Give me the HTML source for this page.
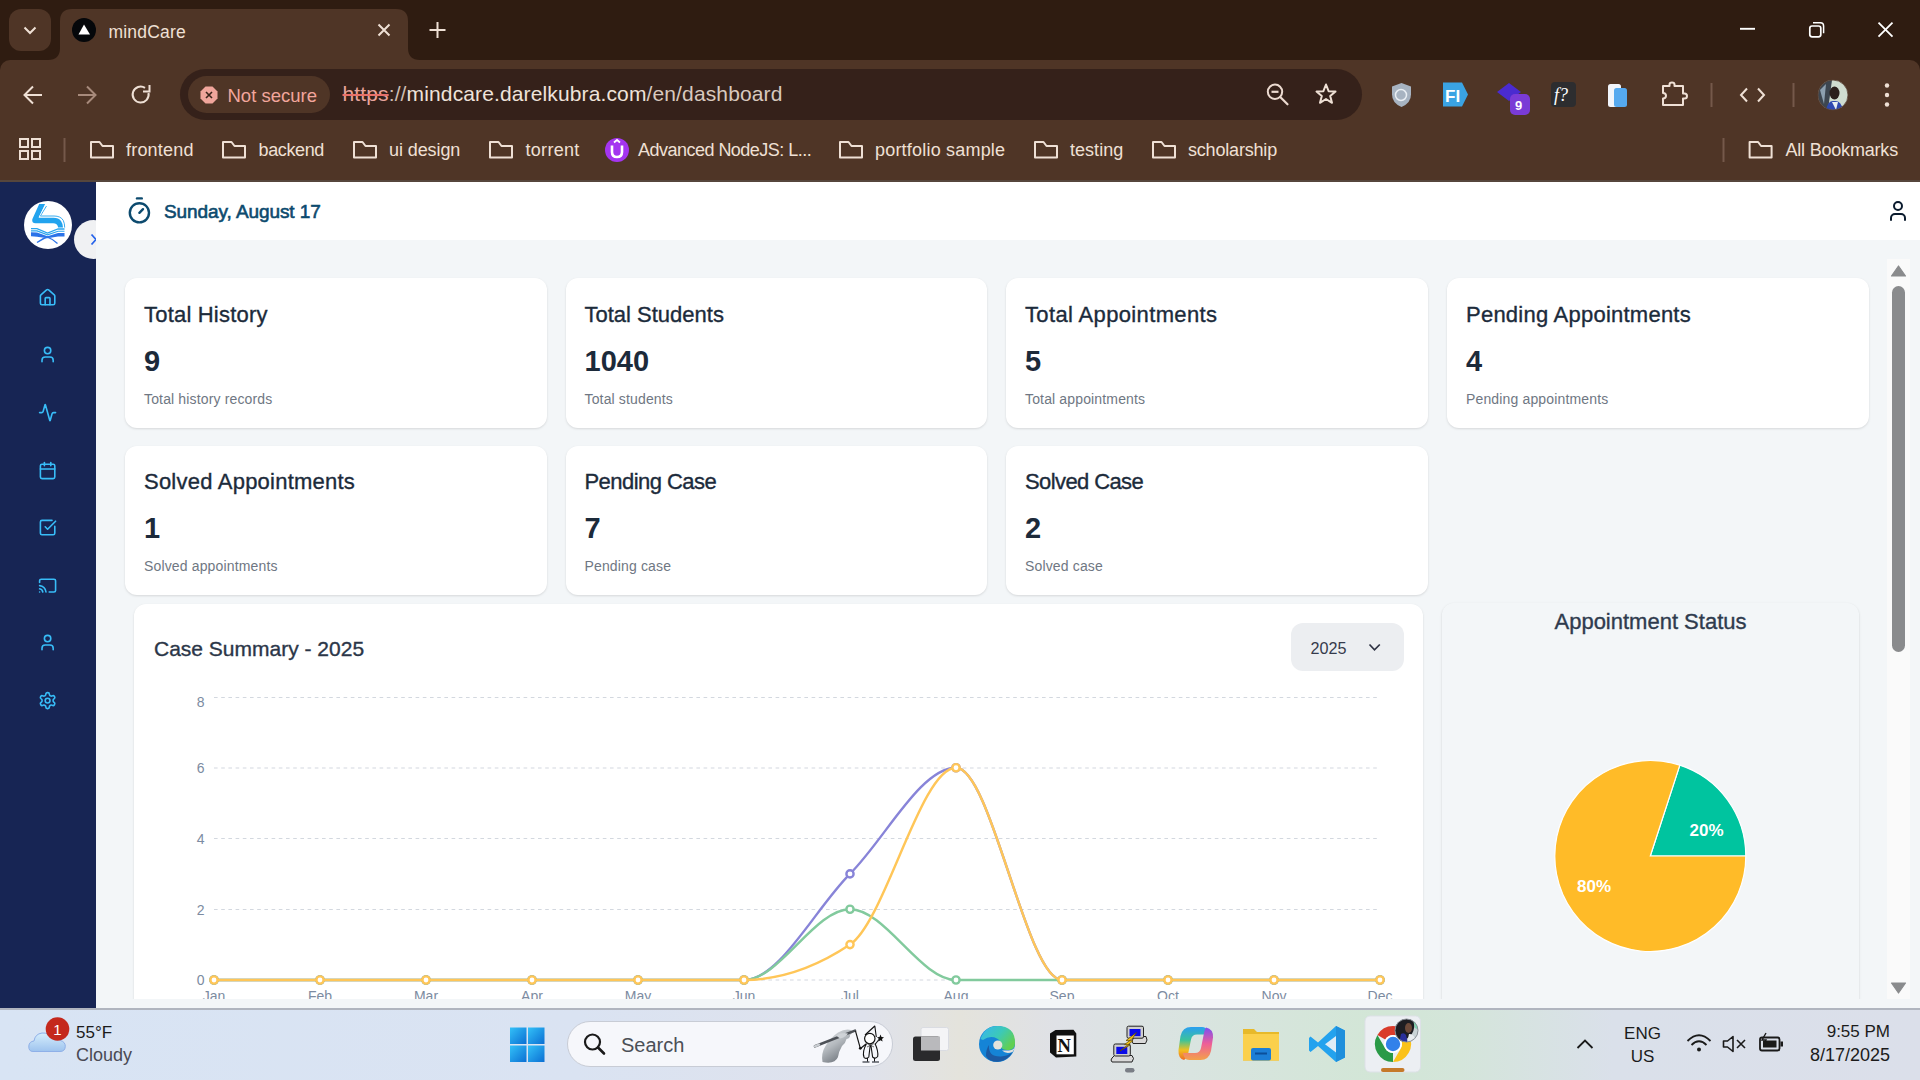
<!DOCTYPE html>
<html><head><meta charset="utf-8"><title>mindCare</title>
<style>
*{box-sizing:border-box;margin:0;padding:0}
html,body{width:1920px;height:1080px;overflow:hidden;background:#2f1c11;font-family:"Liberation Sans",sans-serif}
.a{position:absolute}
svg{position:absolute;overflow:visible}
.cream{color:#efe0d5}
#titlebar{left:0;top:0;width:1920px;height:60px;background:#2f1c11}
#toolbar{left:0;top:60px;width:1920px;height:120px;background:#4f3526;border-radius:10px 10px 0 0}
#sep{left:0;top:180px;width:1920px;height:2px;background:#56463c}
.bm{font-size:18px;color:#efe0d5;white-space:nowrap;line-height:20px;letter-spacing:.2px}
#page{left:0;top:182px;width:1920px;height:826px;background:#f3f6f8;overflow:hidden}
#sidebar{left:0;top:0;width:96px;height:826px;background:#172554;overflow:hidden}
#header{left:96px;top:0;width:1824px;height:58px;background:#fff}
.card{position:absolute;background:#fff;border-radius:12px;box-shadow:0 1px 3px rgba(0,0,0,.08),0 1px 2px rgba(0,0,0,.05)}
.ct{position:absolute;left:19px;top:23.5px;font-size:22px;color:#1c2b3b;-webkit-text-stroke:.35px #1c2b3b;white-space:nowrap;line-height:26px}
.cn{position:absolute;left:19px;top:66.5px;font-size:29px;font-weight:bold;color:#1c2a3a;line-height:32px}
.cs{position:absolute;left:19px;top:112.5px;font-size:14px;color:#6f7783;letter-spacing:.15px;white-space:nowrap;line-height:16px}
#taskbar{left:0;top:1008px;width:1920px;height:72px;background:linear-gradient(90deg,#d8e4f4 0%,#dae3f2 30%,#dfe2ec 45%,#e4e3dc 50%,#dfe1e6 55%,#d9e4e0 62%,#d2e6d6 72%,#d4e5da 76%,#dae0ea 84%,#dbdfea 100%)}
.tb{font-size:18px;color:#1b1b1b;white-space:nowrap;line-height:20px}
</style></head>
<body>
<!-- ============ TITLE BAR ============ -->
<div id="titlebar" class="a">
  <!-- tab search -->
  <div class="a" style="left:9px;top:9px;width:42px;height:42px;border-radius:12px;background:#4f3526"></div>
  <svg style="left:0;top:0" width="60" height="60"><path d="M24.5 27.5 L30 33 L35.5 27.5" fill="none" stroke="#efe0d5" stroke-width="2"/></svg>
  <!-- active tab -->
  <svg style="left:48px;top:9px" width="372" height="51"><path d="M0 51 Q12 51 12 39 L12 12 Q12 0 24 0 L348 0 Q360 0 360 12 L360 39 Q360 51 372 51 Z" fill="#4f3526"/></svg>
  <div class="a" style="left:72px;top:18px;width:24px;height:24px;border-radius:50%;background:#05070a"></div>
  <svg style="left:0;top:0" width="100" height="60"><path d="M84 24.5 L90 34.5 L78.5 34.5 Z" fill="#fff"/></svg>
  <div class="a bm" style="left:108.5px;top:21.5px;font-size:17.5px">mindCare</div>
  <svg style="left:0;top:0" width="460" height="60"><path d="M378.5 24.5 L389.5 35.5 M389.5 24.5 L378.5 35.5" stroke="#efe0d5" stroke-width="2"/><path d="M437.5 22 V38 M429.5 30 H445.5" stroke="#efe0d5" stroke-width="2"/></svg>
  <!-- window controls -->
  <svg style="left:0;top:0" width="1920" height="60">
    <path d="M1740 28.8 H1755" stroke="#fff" stroke-width="1.9"/>
    <rect x="1809.8" y="26" width="11" height="10.8" rx="2.3" fill="none" stroke="#fff" stroke-width="1.7"/>
    <path d="M1813 22.8 H1820.5 Q1823.6 22.8 1823.6 25.9 V33.3" fill="none" stroke="#fff" stroke-width="1.5"/>
    <path d="M1878.5 22.7 L1892.5 36.7 M1892.5 22.7 L1878.5 36.7" stroke="#fff" stroke-width="1.8"/>
  </svg>
</div>

<!-- ============ TOOLBAR + BOOKMARKS ============ -->
<div id="toolbar" class="a">
  <svg style="left:0;top:0" width="180" height="60">
    <path d="M42 35 H25 M33 26.5 L24.5 35 L33 43.5" fill="none" stroke="#efe0d5" stroke-width="2"/>
    <path d="M78 35 H95 M87 26.5 L95.5 35 L87 43.5" fill="none" stroke="#a78a7b" stroke-width="2"/>
    <path d="M148.5 33 A8 8 0 1 1 145 27.8" fill="none" stroke="#efe0d5" stroke-width="2"/>
    <path d="M149.5 25 V31.5 H143" fill="none" stroke="#efe0d5" stroke-width="2"/>
  </svg>
  <!-- omnibox -->
  <div class="a" style="left:180px;top:9px;width:1182px;height:51px;border-radius:26px;background:#35211a"></div>
  <div class="a" style="left:188px;top:16px;width:142px;height:37px;border-radius:19px;background:#4f3526"></div>
  <svg style="left:0;top:0" width="240" height="60">
    <path d="M205.5 26.5 H212.5 L217.5 31.5 V38.5 L212.5 43.5 H205.5 L200.5 38.5 V31.5 Z" fill="#f0a59b"/>
    <path d="M206 32 L212 38 M212 32 L206 38" stroke="#3a241a" stroke-width="1.6"/>
  </svg>
  <div class="a" style="left:227.5px;top:24.5px;font-size:18.5px;color:#f2a69c;line-height:22px;white-space:nowrap">Not secure</div>
  <div id="url" class="a" style="left:342.5px;top:22px;font-size:21px;letter-spacing:.13px;line-height:24px;white-space:nowrap;color:#efe3da"><span style="color:#e8a49c;text-decoration:line-through;text-decoration-color:#e8706a">https</span><span style="color:#cdbdb2">://</span>mindcare.darelkubra.com<span style="color:#d8c9bf">/en/dashboard</span></div>
  <svg style="left:0;top:0" width="1920" height="60">
    <circle cx="1275" cy="31.8" r="7.2" fill="none" stroke="#ecdad0" stroke-width="2"/>
    <path d="M1271.5 31.8 H1278.5" stroke="#ecdad0" stroke-width="2.2"/><path d="M1280.2 37 L1287.5 44.3" stroke="#ecdad0" stroke-width="2.2" stroke-linecap="round"/>
    <path d="M1326 24.5 L1328.6 31.2 L1335.5 31.6 L1330.2 36 L1332 42.8 L1326 39 L1320 42.8 L1321.8 36 L1316.5 31.6 L1323.4 31.2 Z" fill="none" stroke="#efe0d5" stroke-width="2" stroke-linejoin="round"/>
  </svg>
  <!-- extensions -->
  <svg style="left:0;top:0" width="1920" height="60">
    <path d="M1401.5 23 L1411 26.5 V34.5 Q1411 43 1401.5 47 Q1392 43 1392 34.5 V26.5 Z" fill="#a7b3c1"/>
    <circle cx="1401" cy="35" r="5.5" fill="none" stroke="#e9eef3" stroke-width="1.5"/>
    <path d="M1443 22.5 H1462 L1468 34.5 L1462 46.5 H1443 Z" fill="#3aa3e3"/>
    <text x="1445" y="42" font-family="Liberation Sans" font-weight="bold" font-size="17" fill="#fff">FI</text>
    <path d="M1509 23 L1521 32 L1509 41 L1497 32 Z" fill="#4a2bd0"/>
    <rect x="1510" y="34" width="20" height="21" rx="5" fill="#7a3bd6"/>
    <text x="1515" y="50" font-family="Liberation Sans" font-weight="bold" font-size="13" fill="#fff">9</text>
    <rect x="1551" y="22" width="25" height="25" rx="4" fill="#2d2d2f"/>
    <text x="1554" y="41" font-family="Liberation Serif" font-style="italic" font-size="18" fill="#fff">f?</text>
    <rect x="1608" y="24" width="13" height="23" rx="2.5" fill="#f1f5fb"/>
    <rect x="1614" y="28" width="13" height="19" rx="2.5" fill="#55a9ef"/>
    <path d="M1663 26 H1669.5 V24.5 Q1669.5 22.5 1672 22.5 Q1674.5 22.5 1674.5 24.5 V26 H1683 V33.5 H1684.5 Q1687 33.5 1687 36 Q1687 38.5 1684.5 38.5 H1683 V45 H1663 V38.5 Q1666 38.5 1666 35.8 Q1666 33 1663 33 Z" fill="none" stroke="#efe0d5" stroke-width="2" stroke-linejoin="round"/>
    <path d="M1711.5 23 V47" stroke="#75594a" stroke-width="2"/>
    <path d="M1747 28.5 L1741 35 L1747 41.5 M1758 28.5 L1764 35 L1758 41.5" fill="none" stroke="#efe0d5" stroke-width="2"/>
    <path d="M1793.5 23 V47" stroke="#75594a" stroke-width="2"/>
    <circle cx="1887" cy="25.5" r="2.2" fill="#efe0d5"/><circle cx="1887" cy="35" r="2.2" fill="#efe0d5"/><circle cx="1887" cy="44.5" r="2.2" fill="#efe0d5"/>
  </svg>
  <svg style="left:0;top:0" width="1920" height="60"><defs><clipPath id="avc"><circle cx="1833" cy="35" r="15"/></clipPath></defs>
   <g clip-path="url(#avc)"><rect x="1818" y="20" width="30" height="30" fill="#cfdcd0"/><path d="M1818 20 H1832 L1828 50 H1818 Z" fill="#3d4650"/><path d="M1820 30 L1826 24 L1824 44 Z" fill="#8da0b0"/>
   <ellipse cx="1834.5" cy="33" rx="5" ry="6.5" fill="#2a1f1c"/><path d="M1826 50 Q1828 40 1834 41 Q1841 40 1843 50 Z" fill="#2f49b0"/><path d="M1832 42 L1836 50 L1838 42 Z" fill="#e8eef2"/></g>
   <circle cx="1833" cy="35" r="15" fill="none" stroke="#5a4236" stroke-width=".8"/></svg>

  <!-- bookmarks bar -->
  <svg style="left:0;top:60px" width="1920" height="60">
    <g fill="none" stroke="#efe0d5" stroke-width="2">
      <rect x="20" y="19" width="8" height="8"/><rect x="32" y="19" width="8" height="8"/><rect x="20" y="31" width="8" height="8"/><rect x="32" y="31" width="8" height="8"/>
    </g>
    <path d="M64.5 18 V42" stroke="#75594a" stroke-width="2"/>
    <g id="fold" fill="none" stroke="#efe0d5" stroke-width="2" stroke-linejoin="round">
      <path d="M91 22 H99.5 L102.5 26 H113 V37.6 H91 Z"/>
      <path d="M223 22 H231.5 L234.5 26 H245 V37.6 H223 Z"/>
      <path d="M354 22 H362.5 L365.5 26 H376 V37.6 H354 Z"/>
      <path d="M490 22 H498.5 L501.5 26 H512 V37.6 H490 Z"/>
      <path d="M840 22 H848.5 L851.5 26 H862 V37.6 H840 Z"/>
      <path d="M1035 22 H1043.5 L1046.5 26 H1057 V37.6 H1035 Z"/>
      <path d="M1153 22 H1161.5 L1164.5 26 H1175 V37.6 H1153 Z"/>
      <path d="M1749.6 22 H1758.1 L1761.1 26 H1771.6 V37.6 H1749.6 Z"/>
    </g>
    <path d="M1723.5 18 V42" stroke="#75594a" stroke-width="2"/>
    <circle cx="617" cy="30" r="12" fill="#a435f0"/>
    <path d="M612 25.5 V32 Q612 37 617 37 Q622 37 622 32 V25.5" fill="none" stroke="#fff" stroke-width="2.6"/><path d="M614 22.5 L617 20 L620 22.5" fill="none" stroke="#fff" stroke-width="1.8"/>
  </svg>
  <div class="a bm" style="left:126px;top:79.5px">frontend</div>
  <div class="a bm" style="left:258.5px;top:79.5px;letter-spacing:-0.37px">backend</div>
  <div class="a bm" style="left:389px;top:79.5px;letter-spacing:-0.09px">ui design</div>
  <div class="a bm" style="left:525.5px;top:79.5px;letter-spacing:0.29px">torrent</div>
  <div class="a bm" style="left:638px;top:79.5px;letter-spacing:-.52px">Advanced NodeJS: L...</div>
  <div class="a bm" style="left:875px;top:79.5px">portfolio sample</div>
  <div class="a bm" style="left:1070px;top:79.5px;letter-spacing:0.03px">testing</div>
  <div class="a bm" style="left:1188px;top:79.5px;letter-spacing:-0.19px">scholarship</div>
  <div class="a bm" style="left:1785.4px;top:79.5px;letter-spacing:-0.19px">All Bookmarks</div>
</div>
<div id="sep" class="a"></div>

<!-- PAGE -->
<div id="page" class="a">
<div id="sidebar" class="a">
  <div class="a" style="left:24px;top:19px;width:48px;height:48px;border-radius:50%;background:#fff"></div>
  <svg style="left:0;top:-182px" width="96" height="300">
    <path d="M39.2 204 H45.1 L38.6 217.7 H53.5 Q58.5 217.7 61 221 Q63 224 63 227.6 H58.1 Q58 225.5 56.5 224.3 Q55.3 223.2 53 223.2 H35.5 Q31.6 223.2 32.3 219.2 Z" fill="#22a3ee"/>
    <path d="M46.5 206 L40.3 216 H54 Q60.8 216 63.3 220.5 Q64.7 223.5 64.7 227.6" fill="none" stroke="#22a3ee" stroke-width=".9"/>
    <path d="M45.2 205.5 L39.2 216.9" fill="none" stroke="#fff" stroke-width=".6"/>
    <path d="M31 228.6 H37 L47.5 233 L58 229 H64.5" fill="none" stroke="#2aa5ee" stroke-width="1.3"/>
    <path d="M31 230.9 H37 L47.5 234.8 L58 231.2 H64.5" fill="none" stroke="#2aa5ee" stroke-width="1.1"/>
    <path d="M31 232.2 L37 232.6 L47.5 236.3 L58 233 H64.5 V236.6 L58 236.6 L47.5 238.3 L37 236.8 L31 236.2 Z" fill="#2b73e8"/>
    <path d="M37 242.6 Q43 238 49 236.5 M46 236.5 Q52 238.5 57.5 243.6" fill="none" stroke="#2b73e8" stroke-width="1.3"/>
  </svg>
  <div class="a" style="left:74px;top:38px;width:39px;height:39px;border-radius:50%;background:#f0f1f3"></div>
  <svg style="left:0;top:0" width="96" height="100"><path d="M91.5 52.5 L96 57.5 L91.5 62.5" fill="none" stroke="#2563eb" stroke-width="1.8"/></svg>
  <g></g>
  <svg style="left:38.4px;top:105.9px" width="19.2" height="19.2" viewBox="0 0 24 24" fill="none" stroke="#38bdf8" stroke-width="2" stroke-linecap="round" stroke-linejoin="round"><path d="M15 21v-8a1 1 0 0 0-1-1h-4a1 1 0 0 0-1 1v8"/><path d="M3 10a2 2 0 0 1 .709-1.528l7-5.999a2 2 0 0 1 2.582 0l7 5.999A2 2 0 0 1 21 10v9a2 2 0 0 1-2 2H5a2 2 0 0 1-2-2z"/></svg>
  <svg style="left:38.4px;top:163.4px" width="19.2" height="19.2" viewBox="0 0 24 24" fill="none" stroke="#38bdf8" stroke-width="2" stroke-linecap="round" stroke-linejoin="round"><path d="M19 21v-2a4 4 0 0 0-4-4H9a4 4 0 0 0-4 4v2"/><circle cx="12" cy="7" r="4"/></svg>
  <svg style="left:38.4px;top:220.9px" width="19.2" height="19.2" viewBox="0 0 24 24" fill="none" stroke="#38bdf8" stroke-width="2" stroke-linecap="round" stroke-linejoin="round"><path d="M22 12h-2.48a2 2 0 0 0-1.93 1.46l-2.35 8.36a.25.25 0 0 1-.48 0L9.24 2.18a.25.25 0 0 0-.48 0l-2.35 8.36A2 2 0 0 1 4.49 12H2"/></svg>
  <svg style="left:38.4px;top:278.9px" width="19.2" height="19.2" viewBox="0 0 24 24" fill="none" stroke="#38bdf8" stroke-width="2" stroke-linecap="round" stroke-linejoin="round"><path d="M8 2v4"/><path d="M16 2v4"/><rect width="18" height="18" x="3" y="4" rx="2"/><path d="M3 10h18"/></svg>
  <svg style="left:38.4px;top:335.9px" width="19.2" height="19.2" viewBox="0 0 24 24" fill="none" stroke="#38bdf8" stroke-width="2" stroke-linecap="round" stroke-linejoin="round"><path d="M21 10.5V19a2 2 0 0 1-2 2H5a2 2 0 0 1-2-2V5a2 2 0 0 1 2-2h12.5"/><path d="m9 11 3 3L22 4"/></svg>
  <svg style="left:38.4px;top:393.9px" width="19.2" height="19.2" viewBox="0 0 24 24" fill="none" stroke="#38bdf8" stroke-width="2" stroke-linecap="round" stroke-linejoin="round"><path d="M2 8V6a2 2 0 0 1 2-2h16a2 2 0 0 1 2 2v12a2 2 0 0 1-2 2h-6"/><path d="M2 12a9 9 0 0 1 8 8"/><path d="M2 16a5 5 0 0 1 4 4"/><line x1="2" x2="2.01" y1="20" y2="20"/></svg>
  <svg style="left:38.4px;top:450.9px" width="19.2" height="19.2" viewBox="0 0 24 24" fill="none" stroke="#38bdf8" stroke-width="2" stroke-linecap="round" stroke-linejoin="round"><path d="M19 21v-2a4 4 0 0 0-4-4H9a4 4 0 0 0-4 4v2"/><circle cx="12" cy="7" r="4"/></svg>
  <svg style="left:38.4px;top:508.9px" width="19.2" height="19.2" viewBox="0 0 24 24" fill="none" stroke="#38bdf8" stroke-width="2" stroke-linecap="round" stroke-linejoin="round"><path d="M12.22 2h-.44a2 2 0 0 0-2 2v.18a2 2 0 0 1-1 1.73l-.43.25a2 2 0 0 1-2 0l-.15-.08a2 2 0 0 0-2.73.73l-.22.38a2 2 0 0 0 .73 2.73l.15.1a2 2 0 0 1 1 1.72v.51a2 2 0 0 1-1 1.74l-.15.09a2 2 0 0 0-.73 2.73l.22.38a2 2 0 0 0 2.730.73l.15-.08a2 2 0 0 1 2 0l.43.25a2 2 0 0 1 1 1.73V20a2 2 0 0 0 2 2h.44a2 2 0 0 0 2-2v-.18a2 2 0 0 1 1-1.73l.43-.25a2 2 0 0 1 2 0l.15.08a2 2 0 0 0 2.73-.73l.22-.39a2 2 0 0 0-.73-2.73l-.15-.08a2 2 0 0 1-1-1.74v-.5a2 2 0 0 1 1-1.74l.15-.09a2 2 0 0 0 .73-2.73l-.22-.38a2 2 0 0 0-2.73-.73l-.15.08a2 2 0 0 1-2 0l-.43-.25a2 2 0 0 1-1-1.73V4a2 2 0 0 0-2-2z"/><circle cx="12" cy="12" r="3"/></svg>
</div>
<div id="header" class="a">
  <svg style="left:29.1px;top:13.8px" width="28.8" height="28.8" viewBox="0 0 24 24" fill="none" stroke="#0c4a6e" stroke-width="2" stroke-linecap="round" stroke-linejoin="round"><line x1="10" x2="14" y1="2" y2="2"/><line x1="12" x2="15" y1="14" y2="11"/><circle cx="12" cy="14" r="8"/></svg>
  <div id="date" class="a" style="left:68px;top:18.5px;font-size:19px;color:#0c4a6e;-webkit-text-stroke:.6px #0c4a6e;white-space:nowrap;line-height:22px;letter-spacing:-.08px">Sunday, August 17</div>
  <svg style="left:1790px;top:16.5px" width="24" height="24" viewBox="0 0 24 24" fill="none" stroke="#0b1b2e" stroke-width="2" stroke-linecap="round" stroke-linejoin="round"><path d="M19 21v-2a4 4 0 0 0-4-4H9a4 4 0 0 0-4 4v2"/><circle cx="12" cy="7" r="4"/></svg>
</div>
<!-- scroll container -->
<div class="a" style="left:96px;top:77px;width:1814px;height:740px;overflow:hidden">
 <div class="a" style="left:-96px;top:-259px;width:1920px;height:1080px">
  <div class="card" style="left:125px;top:278px;width:421.5px;height:149.5px"><div class="ct" style="letter-spacing:0.2px">Total History</div><div class="cn">9</div><div class="cs">Total history records</div></div>
  <div class="card" style="left:565.5px;top:278px;width:421.5px;height:149.5px"><div class="ct">Total Students</div><div class="cn">1040</div><div class="cs">Total students</div></div>
  <div class="card" style="left:1006px;top:278px;width:421.5px;height:149.5px"><div class="ct" style="letter-spacing:0.36px">Total Appointments</div><div class="cn">5</div><div class="cs">Total appointments</div></div>
  <div class="card" style="left:1447px;top:278px;width:421.5px;height:149.5px"><div class="ct" style="letter-spacing:0.24px">Pending Appointments</div><div class="cn">4</div><div class="cs">Pending appointments</div></div>
  <div class="card" style="left:125px;top:445.6px;width:421.5px;height:149.5px"><div class="ct" style="letter-spacing:0.23px">Solved Appointments</div><div class="cn">1</div><div class="cs">Solved appointments</div></div>
  <div class="card" style="left:565.5px;top:445.6px;width:421.5px;height:149.5px"><div class="ct" style="letter-spacing:-0.55px">Pending Case</div><div class="cn">7</div><div class="cs">Pending case</div></div>
  <div class="card" style="left:1006px;top:445.6px;width:421.5px;height:149.5px"><div class="ct" style="letter-spacing:-0.6px">Solved Case</div><div class="cn">2</div><div class="cs">Solved case</div></div>
  <!-- chart card -->
  <div class="a" style="left:1442px;top:603px;width:417px;height:500px;border-radius:12px;box-shadow:0 1px 3px rgba(0,0,0,.10),0 1px 2px rgba(0,0,0,.06)"></div>
  <div class="card" style="left:134px;top:604px;width:1289px;height:500px"></div>
  <div class="a" style="left:154px;top:636px;font-size:21px;color:#2b3648;-webkit-text-stroke:.35px #2b3648;white-space:nowrap;line-height:25px">Case Summary - 2025</div>
  <div class="a" style="left:1291px;top:623px;width:112.7px;height:48px;border-radius:12px;background:#eceef1"></div>
  <div class="a" style="left:1310.5px;top:638.2px;font-size:16.2px;color:#363b4c;line-height:20px">2025</div>
  <svg style="left:0;top:0" width="1920" height="1080">
    <path d="M1369.5 644.5 L1374.5 649.8 L1379.8 644.5" fill="none" stroke="#2f3344" stroke-width="1.7"/>
    <g stroke="#d3d8df" stroke-width="1.2" stroke-dasharray="3.6 3.6">
      <path d="M214 697.5 H1380"/><path d="M214 768 H1380"/><path d="M214 838.5 H1380"/><path d="M214 909.5 H1380"/><path d="M214 980 H1380"/>
    </g>
    <g font-family="Liberation Sans" font-size="14" fill="#7c8ba1" text-anchor="end">
      <text x="204.5" y="707">8</text><text x="204.5" y="773">6</text><text x="204.5" y="843.5">4</text><text x="204.5" y="914.5">2</text><text x="204.5" y="985">0</text>
    </g>
    <g font-family="Liberation Sans" font-size="14" fill="#7c8ba1" text-anchor="middle">
      <text x="214" y="1001">Jan</text><text x="320" y="1001">Feb</text><text x="426" y="1001">Mar</text><text x="532" y="1001">Apr</text><text x="638" y="1001">May</text><text x="744" y="1001">Jun</text><text x="850" y="1001">Jul</text><text x="956" y="1001">Aug</text><text x="1062" y="1001">Sep</text><text x="1168" y="1001">Oct</text><text x="1274" y="1001">Nov</text><text x="1380" y="1001">Dec</text>
    </g>
    <path d="M214.00,980.00C249.33,980.00,284.67,980.00,320.00,980.00C355.33,980.00,390.67,980.00,426.00,980.00C461.33,980.00,496.67,980.00,532.00,980.00C567.33,980.00,602.67,980.00,638.00,980.00C673.33,980.00,708.67,980.00,744.00,980.00C779.33,980.00,814.67,909.25,850.00,873.88C885.33,838.50,920.67,767.75,956.00,767.75C991.33,767.75,1026.67,980.00,1062.00,980.00C1097.33,980.00,1132.67,980.00,1168.00,980.00C1203.33,980.00,1238.67,980.00,1274.00,980.00C1309.33,980.00,1344.67,980.00,1380.00,980.00" fill="none" stroke="#8884d8" stroke-width="2.4"/>
<g fill="#fff" stroke="#8884d8" stroke-width="2.4"><circle cx="214" cy="980.00" r="3.6"/><circle cx="320" cy="980.00" r="3.6"/><circle cx="426" cy="980.00" r="3.6"/><circle cx="532" cy="980.00" r="3.6"/><circle cx="638" cy="980.00" r="3.6"/><circle cx="744" cy="980.00" r="3.6"/><circle cx="850" cy="873.88" r="3.6"/><circle cx="956" cy="767.75" r="3.6"/><circle cx="1062" cy="980.00" r="3.6"/><circle cx="1168" cy="980.00" r="3.6"/><circle cx="1274" cy="980.00" r="3.6"/><circle cx="1380" cy="980.00" r="3.6"/></g>
<path d="M214.00,980.00C249.33,980.00,284.67,980.00,320.00,980.00C355.33,980.00,390.67,980.00,426.00,980.00C461.33,980.00,496.67,980.00,532.00,980.00C567.33,980.00,602.67,980.00,638.00,980.00C673.33,980.00,708.67,980.00,744.00,980.00C779.33,980.00,814.67,909.25,850.00,909.25C885.33,909.25,920.67,980.00,956.00,980.00C991.33,980.00,1026.67,980.00,1062.00,980.00C1097.33,980.00,1132.67,980.00,1168.00,980.00C1203.33,980.00,1238.67,980.00,1274.00,980.00C1309.33,980.00,1344.67,980.00,1380.00,980.00" fill="none" stroke="#82ca9d" stroke-width="2.4"/>
<g fill="#fff" stroke="#82ca9d" stroke-width="2.4"><circle cx="214" cy="980.00" r="3.6"/><circle cx="320" cy="980.00" r="3.6"/><circle cx="426" cy="980.00" r="3.6"/><circle cx="532" cy="980.00" r="3.6"/><circle cx="638" cy="980.00" r="3.6"/><circle cx="744" cy="980.00" r="3.6"/><circle cx="850" cy="909.25" r="3.6"/><circle cx="956" cy="980.00" r="3.6"/><circle cx="1062" cy="980.00" r="3.6"/><circle cx="1168" cy="980.00" r="3.6"/><circle cx="1274" cy="980.00" r="3.6"/><circle cx="1380" cy="980.00" r="3.6"/></g>
<path d="M214.00,980.00C249.33,980.00,284.67,980.00,320.00,980.00C355.33,980.00,390.67,980.00,426.00,980.00C461.33,980.00,496.67,980.00,532.00,980.00C567.33,980.00,602.67,980.00,638.00,980.00C673.33,980.00,708.67,980.00,744.00,980.00C779.33,980.00,814.67,968.21,850.00,944.62C885.33,921.04,920.67,767.75,956.00,767.75C991.33,767.75,1026.67,980.00,1062.00,980.00C1097.33,980.00,1132.67,980.00,1168.00,980.00C1203.33,980.00,1238.67,980.00,1274.00,980.00C1309.33,980.00,1344.67,980.00,1380.00,980.00" fill="none" stroke="#ffc658" stroke-width="2.4"/>
<g fill="#fff" stroke="#ffc658" stroke-width="2.4"><circle cx="214" cy="980.00" r="3.6"/><circle cx="320" cy="980.00" r="3.6"/><circle cx="426" cy="980.00" r="3.6"/><circle cx="532" cy="980.00" r="3.6"/><circle cx="638" cy="980.00" r="3.6"/><circle cx="744" cy="980.00" r="3.6"/><circle cx="850" cy="944.62" r="3.6"/><circle cx="956" cy="767.75" r="3.6"/><circle cx="1062" cy="980.00" r="3.6"/><circle cx="1168" cy="980.00" r="3.6"/><circle cx="1274" cy="980.00" r="3.6"/><circle cx="1380" cy="980.00" r="3.6"/></g>
    <!-- pie -->
    <path d="M1650.3,856 L1745.80,856.00 A95.5,95.5 0 0 0 1679.81,765.17 Z" fill="#00C49F" stroke="#fff" stroke-width="1.2"/><path d="M1650.3,856 L1679.81,765.17 A95.5,95.5 0 1 0 1745.80,856.00 Z" fill="#FFBB28" stroke="#fff" stroke-width="1.2"/><g font-family="Liberation Sans" font-weight="bold" font-size="17" fill="#fff"><text x="1689.5" y="835.5">20%</text><text x="1611" y="891.5" text-anchor="end">80%</text></g>
  </svg>
  <!-- pie card -->
  <div class="a" style="left:1442px;top:609px;width:417px;text-align:center;font-size:22px;color:#2f3b4e;-webkit-text-stroke:.35px #2f3b4e;line-height:25px">Appointment Status</div>
 </div>
</div>
<!-- scrollbar -->
<div class="a" style="left:1887px;top:77px;width:23px;height:740px;background:#fafafa"></div>
<svg style="left:0;top:-182px" width="1920" height="1080">
  <path d="M1898.5 266 L1905.5 276 H1891.5 Z" fill="#8a8b8d" stroke="#8a8b8d" stroke-width="1.2" stroke-linejoin="round"/>
  <path d="M1898.5 993 L1905.5 983 H1891.5 Z" fill="#8a8b8d" stroke="#8a8b8d" stroke-width="1.2" stroke-linejoin="round"/>
</svg>
<div class="a" style="left:1892px;top:104px;width:13px;height:366px;border-radius:6.5px;background:#8a8b8d"></div>

</div>

<!-- TASKBAR -->
<div id="taskbar" class="a">
<div class="a" style="left:0;top:0;width:1920px;height:2px;background:#b0b5bf"></div>
<!-- weather -->
<svg style="left:0;top:-1008px" width="1920" height="1080">
  <defs>
    <linearGradient id="cg" x1="0" y1="0" x2="0" y2="1"><stop offset="0" stop-color="#d6eefc"/><stop offset="1" stop-color="#9ec3ee"/></linearGradient>
    <linearGradient id="wg" x1="0" y1="0" x2="1" y2="1"><stop offset="0" stop-color="#33c1f8"/><stop offset="1" stop-color="#0b6fd3"/></linearGradient>
  </defs>
  <path d="M33 1051.5 Q28.5 1051.5 28.8 1046 Q29.2 1041.5 34 1041 Q35 1034 42 1033 Q49 1032.5 51 1038 Q57 1036 60.5 1040.5 Q65.5 1042 65.3 1046.5 Q65 1051.5 60 1051.5 Z" fill="url(#cg)" stroke="#8fb0e8" stroke-width="1"/>
  <circle cx="57.5" cy="1029" r="11.8" fill="#c4281c"/>
  <text x="53.2" y="1035" font-family="Liberation Sans" font-size="15" fill="#fff">1</text>
  <!-- windows logo -->
  <rect x="510" y="1027.5" width="16.5" height="16.5" fill="url(#wg)"/><rect x="528" y="1027.5" width="16.5" height="16.5" fill="url(#wg)"/>
  <rect x="510" y="1045.5" width="16.5" height="16.5" fill="url(#wg)"/><rect x="528" y="1045.5" width="16.5" height="16.5" fill="url(#wg)"/>
  <!-- search -->
  <rect x="567.5" y="1021.5" width="325" height="45" rx="22.5" fill="#f6f7fb" stroke="#c8ccd5" stroke-width="1"/>
  <circle cx="592.5" cy="1042" r="7.5" fill="none" stroke="#1a1a1a" stroke-width="2.2"/>
  <path d="M598 1047.5 L604 1053.5" stroke="#1a1a1a" stroke-width="2.6" stroke-linecap="round"/>
  <!-- illustration -->
  <defs><linearGradient id="hg" x1="0" y1="0" x2=".6" y2="1"><stop offset="0" stop-color="#e2e5e8"/><stop offset=".5" stop-color="#b5babf"/><stop offset="1" stop-color="#6f757c"/></linearGradient></defs>
  <path d="M822.5 1062 Q821 1053 825.5 1046 Q830 1038 838 1032.5 Q845 1028.5 851 1030 Q853.5 1032.5 850 1035 Q850.5 1038 846.5 1039 Q845.5 1043.5 842 1046 Q838.5 1052 838 1057 Q835 1064.5 822.5 1062 Z" fill="url(#hg)"/>
  <path d="M815 1046.3 L855 1030.6" stroke="#4d5157" stroke-width="2.6" stroke-linecap="round"/>
  <path d="M815 1046.3 L819 1044.7" stroke="#c8ccd0" stroke-width="2.4" stroke-linecap="round"/>
  <path d="M836 1035.5 Q842 1032 848 1033.5 Q846 1037 840 1038.5 Z" fill="#cfd3d7"/>
  <path d="M855.5 1031 L860.5 1049" stroke="#111" stroke-width="1.1"/>
  <path d="M866 1044 L860.5 1048.5" stroke="#111" stroke-width="1.1"/><circle cx="860.3" cy="1048.3" r="1.4" fill="#111"/>
  <path d="M865 1035 L874.8 1026 L876.3 1037" fill="none" stroke="#111" stroke-width="1.1" stroke-linejoin="round"/>
  <circle cx="869.8" cy="1038.6" r="5.2" fill="#fff" stroke="#111" stroke-width="1.2"/>
  <path d="M866.5 1043.5 Q862 1052 864 1057.3 Q866.5 1059.5 868.8 1057 L870.3 1044.5 M870.8 1044.5 L872.6 1057 Q875.3 1059.5 877.7 1056.5 Q878.5 1051 875 1043.5" fill="none" stroke="#111" stroke-width="1.1"/>
  <path d="M867 1043.5 L874 1047 M874 1043.5 L867 1047" stroke="#333" stroke-width=".7"/>
  <path d="M867.5 1058 V1062 M874.5 1058 V1062" stroke="#111" stroke-width="1"/>
  <path d="M862.5 1062 H869.5 M872 1062 H879" stroke="#5a5e66" stroke-width="1.6"/>
  <path d="M875 1044.5 L879.8 1038.5" stroke="#111" stroke-width="1.1"/>
  <path d="M880.5 1034.5 L881.5 1037 L884 1037.3 L882 1039 L882.6 1041.5 L880.5 1040.2 L878.4 1041.5 L879 1039 L877 1037.3 L879.5 1037 Z" fill="#111"/>
  <!-- task view -->
  <rect x="921" y="1027.5" width="27.5" height="23" rx="2" fill="#f4f4f6" stroke="#dadce2" stroke-width="1"/>
  <rect x="913" y="1036.5" width="27" height="24.5" rx="2.5" fill="#2a2a2c"/>
  <rect x="921" y="1036.5" width="19" height="14" fill="#b9b9bc"/>
  <!-- edge -->
  <defs>
   <linearGradient id="eg2" x1="0" y1="0" x2="1" y2=".6"><stop offset="0" stop-color="#36b4f2"/><stop offset=".55" stop-color="#3cc9b8"/><stop offset="1" stop-color="#62cf52"/></linearGradient>
  </defs>
  <circle cx="997" cy="1044" r="18" fill="#1584d6"/>
  <path d="M980.5 1039 Q985 1026 997.5 1026 Q1015 1026 1015 1043 Q1015 1049.5 1009 1050 Q1002 1050.5 1001 1047 Q1002 1041 997 1038.5 Q990 1035 983 1040 Z" fill="url(#eg2)"/>
  <path d="M989 1045 Q988 1057 1001 1056.5 Q1008 1056 1012.5 1052 Q1008 1060.5 998 1061.8 Q989 1062 986 1056 Q986 1049 989 1045 Z" fill="#1c5aa3"/>
  <circle cx="997.8" cy="1045" r="4.6" fill="#e4e3dc"/>
  <path d="M1015.2 1046 Q1014 1050 1009 1050.5 L1002 1050.5 Q1006 1054.5 1012.5 1052 Q1015 1049.5 1015.2 1046 Z" fill="#e2e2de"/>
  <!-- notion -->
  <path d="M1050 1033.5 L1055.5 1030 L1073.5 1029.8 L1076.3 1033.5 V1056.5 L1056 1057.5 L1050 1052.5 Z" fill="#111"/>
  <rect x="1056.5" y="1035.5" width="17.3" height="18.8" fill="#fff"/>
  <text x="1057.6" y="1052.3" font-family="Liberation Serif" font-weight="bold" font-size="18.5" fill="#111">N</text>
  <!-- putty -->
  <path d="M1133.5 1038 L1136 1036.5 H1146 L1147 1040 L1145.5 1043.5 H1133 L1132 1041 Z" fill="#d9d9d9" stroke="#222" stroke-width="1"/>
  <rect x="1127" y="1026.2" width="16.5" height="12" rx="1.5" fill="#cfcfcf" stroke="#222" stroke-width="1"/>
  <rect x="1129.5" y="1029" width="11" height="7.2" fill="#0a0ae8"/>
  <path d="M1112 1058 L1114.5 1055.5 H1132 L1133.5 1058.5 L1132 1062 H1112 L1111 1060 Z" fill="#d9d9d9" stroke="#222" stroke-width="1"/>
  <rect x="1113.8" y="1044" width="16.5" height="12" rx="1.5" fill="#cfcfcf" stroke="#222" stroke-width="1"/>
  <rect x="1116.3" y="1046.8" width="11" height="7.2" fill="#0a0ae8"/>
  <path d="M1136.5 1032.5 L1126 1040.5 L1133 1040.8 L1120 1051 L1130 1045 L1124.5 1044.6 L1132.5 1038.5 Z" fill="#f5c518" stroke="#5a4300" stroke-width=".7" stroke-linejoin="round"/>
  <rect x="1125" y="1068" width="9.5" height="4.5" rx="2.2" fill="#7a7e86"/>
  <!-- copilot -->
  <defs>
   <linearGradient id="cp1" x1="0" y1="0" x2="0" y2="1"><stop offset="0" stop-color="#2a9ff0"/><stop offset=".4" stop-color="#3cc39a"/><stop offset=".7" stop-color="#f2c01e"/><stop offset="1" stop-color="#ef6a2a"/></linearGradient>
   <linearGradient id="cp2" x1="0" y1="0" x2="0" y2="1"><stop offset="0" stop-color="#7a4ff2"/><stop offset=".5" stop-color="#ee5e98"/><stop offset="1" stop-color="#f3a24a"/></linearGradient>
  </defs>
  <path d="M1184 1060 Q1178 1058.5 1178.5 1050 L1180.5 1036 Q1182.5 1027 1191 1027 H1202 Q1206 1027 1207.8 1031 L1209 1034.5 H1197 Q1192 1034.5 1191 1039.5 L1188.5 1052 Q1187.5 1058 1184 1060 Z" fill="url(#cp1)"/>
  <path d="M1206 1027.5 Q1213.5 1029 1213 1037.5 L1211 1051 Q1209 1060 1200.5 1060 H1189.5 Q1185.5 1060 1184 1056.5 L1182.8 1053 H1195 Q1200 1053 1201 1048 L1203.5 1035.5 Q1204.5 1029.5 1206 1027.5 Z" fill="url(#cp2)"/>
  <!-- explorer -->
  <path d="M1243 1029 H1254 L1257 1032 H1279 V1060.5 H1243 Z" fill="#e7b92a"/>
  <rect x="1243" y="1034" width="36" height="26.5" fill="#fbd04c"/>
  <rect x="1251" y="1048" width="20" height="12.5" rx="2" fill="#1c7ed6"/>
  <rect x="1255" y="1052.5" width="12" height="2" fill="#0b4f9a"/>
  <!-- vscode -->
  <path d="M1336 1026 L1345 1030.5 V1057.5 L1336 1062 L1318 1046 L1310.5 1052 L1309 1050.5 V1038 L1310.5 1036.5 L1318 1042.5 Z" fill="#23a2ee"/>
  <path d="M1336 1036 V1052.5 L1325 1044.2 Z" fill="#e0ecf6"/>
  <path d="M1336 1026 L1345 1030.5 V1057.5 L1336 1062 Z" fill="#1f8fdc"/>
  <!-- chrome tile -->
  <rect x="1365" y="1016" width="55.5" height="56" rx="5" fill="#eceff3" stroke="#dde1e7" stroke-width="1"/>
  <rect x="1381" y="1068" width="23.5" height="4" rx="2" fill="#c57a2a"/>
  <path d="M1408.59 1035.00 L1393.00 1035.00 A9 9 0 0 0 1385.21 1039.50 L1377.41 1035.00 A18 18 0 0 1 1408.59 1035.00 Z" fill="#d93b2b"/><path d="M1377.41 1035.00 L1385.21 1048.50 A9 9 0 0 0 1393.00 1053.00 L1393.00 1062.00 A18 18 0 0 1 1377.41 1035.00 Z" fill="#2a9a47"/><path d="M1393.00 1062.00 L1400.79 1048.50 A9 9 0 0 0 1400.79 1039.50 L1408.59 1035.00 A18 18 0 0 1 1393.00 1062.00 Z" fill="#fbc21a"/>
  <circle cx="1393" cy="1044" r="9" fill="#fff"/><circle cx="1393" cy="1044" r="7.2" fill="#3281ea"/>
  <defs><clipPath id="avc2"><circle cx="1406.5" cy="1030.5" r="11.5"/></clipPath></defs>
  <g clip-path="url(#avc2)"><rect x="1394" y="1018" width="25" height="25" fill="#c9d3d6"/><path d="M1394 1018 H1414 Q1416 1030 1410 1036 L1402 1043 H1394 Z" fill="#1d1d22"/>
  <ellipse cx="1408.5" cy="1028" rx="3.5" ry="5" fill="#6d4a3a"/><path d="M1399 1043 L1401 1034 Q1404 1032 1406 1035 L1408 1043 Z" fill="#2a2f9a"/><path d="M1407 1043 L1409 1034 Q1414 1033 1417 1043 Z" fill="#e8ecef"/><path d="M1413 1020 L1419 1022 V1030 L1415 1028 Z" fill="#7fd6b0"/></g>
  <circle cx="1406.5" cy="1030.5" r="11.5" fill="none" stroke="#8a9096" stroke-width="1"/>
  <!-- tray -->
  <path d="M1577.5 1048 L1585 1040.5 L1592.5 1048" fill="none" stroke="#1a1a1a" stroke-width="1.8"/>
  <path d="M1687.5 1041 Q1699 1029.5 1710.5 1041" fill="none" stroke="#1a1a1a" stroke-width="1.8"/>
  <path d="M1691.5 1045 Q1699 1037.5 1706.5 1045" fill="none" stroke="#1a1a1a" stroke-width="1.8"/>
  <circle cx="1699" cy="1049.5" r="2" fill="#1a1a1a"/>
  <path d="M1723.5 1041 H1727.5 L1733 1036.5 V1051.5 L1727.5 1047 H1723.5 Z" fill="none" stroke="#1a1a1a" stroke-width="1.6" stroke-linejoin="round"/>
  <path d="M1737 1040 L1745 1048 M1745 1040 L1737 1048" stroke="#1a1a1a" stroke-width="1.6"/>
  <rect x="1760" y="1037.5" width="19.5" height="13" rx="2" fill="none" stroke="#1a1a1a" stroke-width="1.8"/>
  <rect x="1763" y="1040.5" width="13.5" height="7" fill="#1a1a1a"/>
  <rect x="1780.5" y="1041.5" width="2.5" height="5" fill="#1a1a1a"/>
  <path d="M1766 1033 L1762 1040 H1766 L1764 1045" fill="none" stroke="#1a1a1a" stroke-width="1.4"/>
</svg>
<div class="a tb" style="left:76px;top:14.5px;font-size:17px">55°F</div>
<div class="a tb" style="left:76px;top:37px;font-size:18px;color:#4a4a54">Cloudy</div>
<div class="a tb" style="left:621px;top:25px;font-size:20px;color:#4b4f56;line-height:24px">Search</div>
<div class="a tb" style="left:1624px;top:16px;font-size:17px;text-align:center;width:37px">ENG</div>
<div class="a tb" style="left:1624px;top:39px;font-size:17px;text-align:center;width:37px">US</div>
<div class="a tb" style="left:1790px;top:14px;font-size:17px;text-align:right;width:100px">9:55 PM</div>
<div class="a tb" style="left:1790px;top:37px;font-size:18px;text-align:right;width:100px">8/17/2025</div>
</div>
</body></html>
